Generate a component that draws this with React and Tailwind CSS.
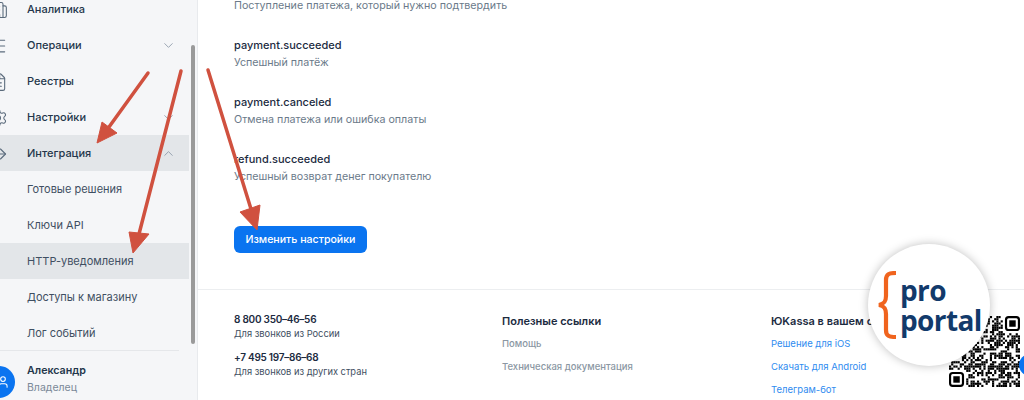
import React from "react";
import { Building2, Menu, FileText, Settings, ArrowRightFromLine, ChevronDown, ChevronUp, User } from "lucide-react";

const QR_SIZE = 33;

function isFinder(x, y) {
    return (x < 8 && y < 8) || (x >= QR_SIZE - 8 && y < 8) || (x < 8 && y >= QR_SIZE - 8);
}

// not a real code, just the same kind of speckle
function qrCells() {
    const cells = [];
    let seed = 7;
    for (let y = 0; y < QR_SIZE; y++) {
        for (let x = 0; x < QR_SIZE; x++) {
            seed = (seed * 1103515245 + 12345) & 0x7fffffff;
            if (!isFinder(x, y) && (seed >> 16) % 100 < 55) cells.push([x, y]);
        }
    }
    return cells;
}

const Finder = ({ x, y }) => (
    <g>
        <rect x={x + 0.5} y={y + 0.5} width="6" height="6" rx="1.2" fill="none" stroke="#000" />
        <rect x={x + 2} y={y + 2} width="3" height="3" fill="#000" />
    </g>
);

const NavRow = ({ icon: Icon, label, chevron, active, sub }) => (
    <div className={`flex items-center h-9 pt-px ${active ? "bg-[#e3e6e9]" : ""}`}>
        {sub ? (
            <span className="w-[27px]" />
        ) : (
            <Icon size={20} strokeWidth={1.3} className="-ml-[12px] mr-[19px] text-[#5b6b7c] shrink-0" />
        )}
        <span className={`text-[11px] ${sub ? "text-[#3f4f62]" : "font-medium text-[#24364b]"}`}>{label}</span>
        {chevron === "down" && <ChevronDown size={15} strokeWidth={1.3} className="ml-auto mr-[13px] text-[#8593a3]" />}
        {chevron === "up" && <ChevronUp size={15} strokeWidth={1.3} className="ml-auto mr-[13px] text-[#8593a3]" />}
    </div>
);

const Event = ({ title, text }) => (
    <div className="mb-[23px]">
        <div className="text-[11px] leading-[17px] font-medium text-[#1c2b3f]">{title}</div>
        <div className="text-[10.7px] leading-[17px] text-[#6b7a8a]">{text}</div>
    </div>
);

export default function App() {
    return (
        <div className="relative flex w-[1024px] h-[400px] overflow-hidden bg-white font-['Inter',sans-serif]">
            <aside className="flex w-[198px] h-full shrink-0 bg-[#f5f6f8] border-r border-[#e8eaed] overflow-hidden">
                <div className="w-[189px] -mt-[9px] shrink-0">
                    <NavRow icon={Building2} label="Аналитика" />
                    <NavRow icon={Menu} label="Операции" chevron="down" />
                    <NavRow icon={FileText} label="Реестры" />
                    <NavRow icon={Settings} label="Настройки" chevron="down" />
                    <NavRow icon={ArrowRightFromLine} label="Интеграция" chevron="up" active />
                    <NavRow sub label="Готовые решения" />
                    <NavRow sub label="Ключи API" />
                    <NavRow sub label="HTTP-уведомления" active />
                    <NavRow sub label="Доступы к магазину" />
                    <NavRow sub label="Лог событий" />
                    <div className="flex items-start border-t border-[#e5e7ea] mr-[10px] -mt-px pt-[11px]">
                        <div className="flex items-center justify-center w-8 h-8 -ml-[17px] mt-[4px] mr-3 rounded-full bg-[#0a74f0] shrink-0">
                            <User size={14} strokeWidth={1.8} className="ml-2 text-white" />
                        </div>
                        <div>
                            <div className="text-[10.7px] leading-[17px] font-semibold text-[#24364b]">Александр</div>
                            <div className="text-[10.5px] leading-[17px] text-[#7a8897]">Владелец</div>
                        </div>
                    </div>
                </div>
                <div className="w-[9px] h-full pl-[2px] pt-[45px]">
                    <div className="w-[4px] h-[299px] rounded-sm bg-[#9a9a9a]" />
                </div>
            </aside>

            <main className="flex-1 min-w-0">
                <div className="pl-9 -mt-[3px]">
                    <div className="text-[10.7px] leading-[17px] text-[#6b7a8a] mb-[23px]">Поступление платежа, который нужно подтвердить</div>
                    <Event title="payment.succeeded" text="Успешный платёж" />
                    <Event title="payment.canceled" text="Отмена платежа или ошибка оплаты" />
                    <Event title="refund.succeeded" text="Успешный возврат денег покупателю" />
                    <button className="block w-[133px] h-[27px] mt-[41px] rounded-md bg-[#0a74f0] text-[10.6px] font-medium text-white">
                        Изменить настройки
                    </button>
                </div>
                <footer className="flex mt-[36px] pt-[21px] pl-9 border-t border-[#eceef0] whitespace-nowrap">
                    <div className="w-[268px]">
                        <div className="text-[10px] leading-4 font-semibold tracking-[-0.25px] text-[#1c2b3f]">8 800 350–46–56</div>
                        <div className="text-[9.3px] leading-[14px] text-[#3f4f62]">Для звонков из России</div>
                        <div className="mt-2 text-[10px] leading-4 font-semibold tracking-[-0.25px] text-[#1c2b3f]">+7 495 197–86–68</div>
                        <div className="text-[9.3px] leading-[14px] text-[#3f4f62]">Для звонков из других стран</div>
                    </div>
                    <div className="w-[269px] pt-[2px]">
                        <div className="text-[11px] leading-4 font-semibold text-[#1c2b3f]">Полезные ссылки</div>
                        <div className="mt-[7px] text-[9.5px] leading-4 font-medium text-[#8b97a3]">Помощь</div>
                        <div className="mt-[7px] text-[9.5px] leading-4 font-medium text-[#8b97a3]">Техническая документация</div>
                    </div>
                    <div className="pt-[2px]">
                        <div className="text-[11px] leading-4 font-semibold text-[#1c2b3f]">ЮKassa в вашем смартфоне</div>
                        <div className="mt-[7px] text-[9.5px] leading-4 text-[#2f8cf0]">Решение для iOS</div>
                        <div className="mt-[7px] text-[9.5px] leading-4 text-[#2f8cf0]">Скачать для Android</div>
                        <div className="mt-[7px] text-[9.5px] leading-4 text-[#2f8cf0]">Телеграм-бот</div>
                    </div>
                </footer>
            </main>

            {/* red arrows drawn over the screenshot */}
            <svg className="absolute left-0 top-0 pointer-events-none" width="1024" height="400" fill="#d0513f" stroke="#d0513f">
                <line x1="148" y1="73" x2="109" y2="127" strokeWidth="3.5" strokeLinecap="round" />
                <polygon points="97,143 102,122 117,133" />
                <line x1="181" y1="71" x2="139" y2="234" strokeWidth="3.5" strokeLinecap="round" />
                <polygon points="133,253 129,232 149,234" />
                <line x1="208" y1="70" x2="251" y2="209" strokeWidth="3.5" strokeLinecap="round" />
                <polygon points="257,230 240,212 260,205" />
            </svg>

            {/* qr code */}
            <svg className="absolute left-[949px] top-[316px]" width="71" height="71" viewBox="0 0 33 33">
                {qrCells().map(([x, y]) => (
                    <rect key={`${x}-${y}`} x={x} y={y} width="1" height="1" fill="#000" />
                ))}
                <Finder x={26} y={0} />
                <Finder x={0} y={26} />
            </svg>
            <div className="absolute left-[1019px] top-[354px] w-[22px] h-[22px] rounded-full bg-[#0a74f0]" />

            {/* proportal badge */}
            <div className="absolute left-[868px] top-[244px] flex items-center w-[122px] h-[122px] rounded-full bg-white shadow-[0_0_10px_rgba(0,0,0,0.25)]">
                <svg className="ml-[9px] shrink-0" width="20" height="68" viewBox="0 0 20 68" fill="none" stroke="#f0641e" strokeWidth="4.2">
                    <path d="M19 2 C12 2 9 3 9 9 L9 25 C9 31 7 33 2 34 C7 35 9 37 9 43 L9 59 C9 65 12 66 19 66" />
                </svg>
                <div className="ml-[3px] font-['Open_Sans',sans-serif] text-[28px] leading-[30px] font-bold text-[#123a6b] tracking-[-0.6px]">
                    <div>pro</div>
                    <div>portal</div>
                </div>
            </div>
        </div>
    );
}
